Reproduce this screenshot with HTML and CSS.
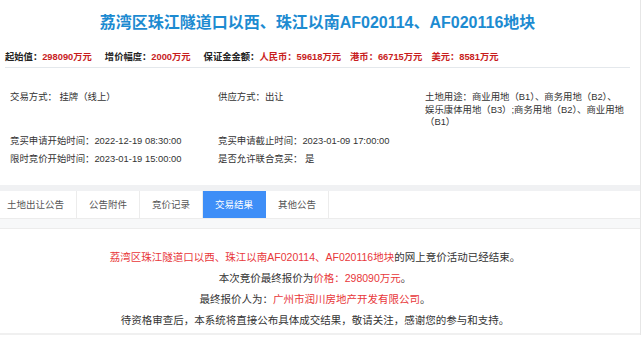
FILE: index.html
```html
<!DOCTYPE html>
<html lang="zh-CN">
<head>
    <meta charset="UTF-8">
    <meta name="viewport" content="width=device-width, initial-scale=1.0">
    <title>地块详情</title>
    <link rel="stylesheet" href="styles.css">
</head>
<body>
    <div class="page">
        <div class="detail">
            <h1 class="title">荔湾区珠江隧道口以西、珠江以南AF020114、AF020116地块</h1>
            <div class="price-row">
                <span class="price-item">起始值：<em>298090万元</em></span>
                <span class="price-item">增价幅度：<em>2000万元</em></span>
                <span class="price-item deposit">
                    <span>保证金金额：<em>人民币：59618万元</em></span>
                    <em>港币：66715万元</em>
                    <em>美元：8581万元</em>
                </span>
            </div>
            <div class="info-grid">
                <div class="info-cell">交易方式： 挂牌（线上）</div>
                <div class="info-cell">供应方式：出让</div>
                <div class="info-cell">土地用途：商业用地（B1）、商务用地（B2）、<br>娱乐康体用地（B3）;商务用地（B2）、商业用地<br>（B1）</div>
                <div class="info-cell">竞买申请开始时间：2022-12-19 08:30:00</div>
                <div class="info-cell">竞买申请截止时间：2023-01-09 17:00:00</div>
                <div class="info-cell"></div>
                <div class="info-cell">限时竞价开始时间：2023-01-19 15:00:00</div>
                <div class="info-cell">是否允许联合竞买： 是</div>
                <div class="info-cell"></div>
            </div>
        </div>

        <div class="tabs">
            <div class="tab">土地出让公告</div>
            <div class="tab">公告附件</div>
            <div class="tab">竞价记录</div>
            <div class="tab active">交易结果</div>
            <div class="tab">其他公告</div>
        </div>
        <div class="tab-gap"></div>

        <div class="result">
            <p><span class="hl">荔湾区珠江隧道口以西、珠江以南AF020114、AF020116地块</span>的网上竞价活动已经结束。</p>
            <p>本次竞价最终报价为<span class="hl">价格：298090万元</span>。</p>
            <p>最终报价人为：<span class="hl">广州市润川房地产开发有限公司</span>。</p>
            <p>待资格审查后，本系统将直接公布具体成交结果，敬请关注，感谢您的参与和支持。</p>
        </div>
    </div>
</body>
</html>
```

FILE: styles.css
```css
body {
    margin: 0;
    background: #fff;
    font-family: "Liberation Sans", "Noto Sans CJK SC", sans-serif;
    color: #333;
    overflow: hidden;
}
.page {
    width: 640px;
    border-right: 1px solid #e6e6e6;
    background: #fff;
}
.detail {
    padding: 0 10px 0 5px;
}
.title {
    margin: 0;
    padding-top: 12px;
    height: 24px;
    line-height: 22px;
    font-size: 16px;
    font-weight: bold;
    color: #1d8bd1;
    text-align: center;
}
.price-row {
    display: flex;
    gap: 13px;
    margin-top: 14px;
    padding-bottom: 3px;
    border-bottom: 1px solid #e4e8ec;
    font-size: 9.3px;
    line-height: 14px;
    font-weight: bold;
    color: #222;
}
.price-item em {
    font-style: normal;
    color: #c81d1d;
}
.deposit {
    display: flex;
    gap: 9px;
}
.info-grid {
    display: grid;
    grid-template-columns: 208px 207px 212px;
    row-gap: 6px;
    padding: 23px 0 0 5px;
    font-size: 9.4px;
    line-height: 12.5px;
    color: #333;
}
.info-cell {
    white-space: nowrap;
}
.tabs {
    display: flex;
    margin-top: 19px;
    border-top: 6px solid #f0f1f3;
    border-bottom: 1px solid #ececec;
    background: #fff;
    overflow: hidden;
}
.tab {
    padding: 0 12px;
    height: 27px;
    line-height: 27px;
    font-size: 9.5px;
    color: #555;
    border-right: 1px solid #ececec;
}
.tab:first-child {
    padding-left: 7px;
}
.tab.active {
    background: #3e8ef7;
    color: #fff;
    border-right-color: #3e8ef7;
}
.tab-gap {
    height: 9px;
    background: #f7f8f9;
    border-bottom: 1px solid #ececec;
}
.result {
    padding: 21px 10px 0 0;
    border-bottom: 2px solid #f0f0f0;
    text-align: center;
    font-size: 10.5px;
    line-height: 14px;
    color: #333;
}
.result p {
    margin: 0 0 7px;
}
.result p:last-child {
    margin-bottom: 6px;
}
.hl {
    color: #e8373a;
}
```
